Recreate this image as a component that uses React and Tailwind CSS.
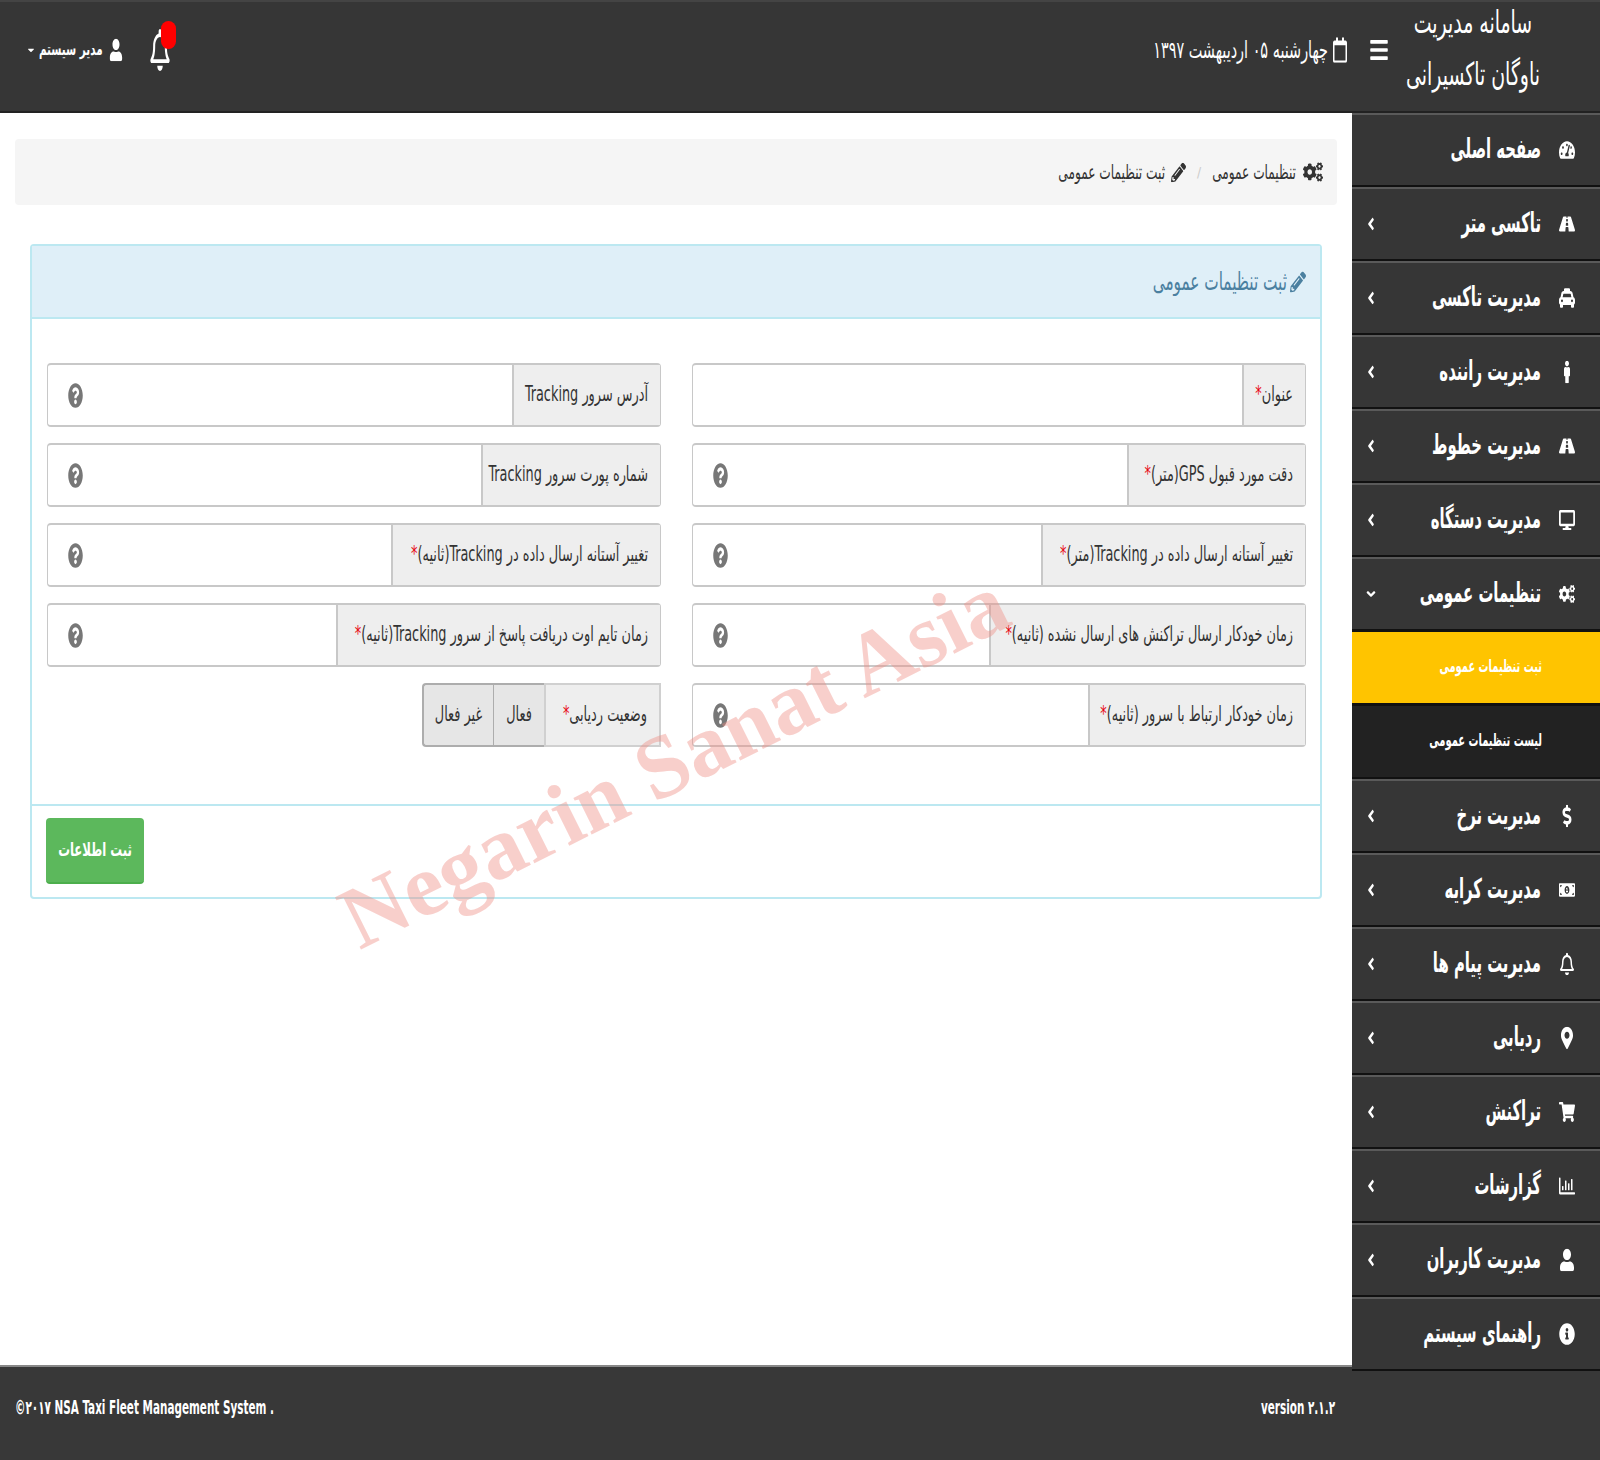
import React from "react";
import {
  FaAngleDown,
  FaAngleLeft,
  FaBars,
  FaCaretDown,
  FaRegChartBar,
  FaCogs,
  FaDesktop,
  FaDollarSign,
  FaInfoCircle,
  FaMale,
  FaMapMarkerAlt,
  FaMoneyBillAlt,
  FaPencilAlt,
  FaQuestionCircle,
  FaRegBell,
  FaRegCalendar,
  FaRoad,
  FaShoppingCart,
  FaTachometerAlt,
  FaTaxi,
  FaUser,
} from "react-icons/fa";

const menu = [
  { title: "صفحه اصلی", icon: FaTachometerAlt },
  { title: "تاکسی متر", icon: FaRoad, arrow: true },
  { title: "مدیریت تاکسی", icon: FaTaxi, arrow: true },
  { title: "مدیریت راننده", icon: FaMale, arrow: true },
  { title: "مدیریت خطوط", icon: FaRoad, arrow: true },
  { title: "مدیریت دستگاه", icon: FaDesktop, arrow: true },
  { title: "تنظیمات عمومی", icon: FaCogs, open: true },
  { title: "ثبت تنظیمات عمومی", sub: "active" },
  { title: "لیست تنظیمات عمومی", sub: "idle" },
  { title: "مدیریت نرخ", icon: FaDollarSign, arrow: true },
  { title: "مدیریت کرایه", icon: FaMoneyBillAlt, arrow: true },
  { title: "مدیریت پیام ها", icon: FaRegBell, arrow: true },
  { title: "ردیابی", icon: FaMapMarkerAlt, arrow: true },
  { title: "تراکنش", icon: FaShoppingCart, arrow: true },
  { title: "گزارشات", icon: FaRegChartBar, arrow: true },
  { title: "مدیریت کاربران", icon: FaUser, arrow: true },
  { title: "راهنمای سیستم", icon: FaInfoCircle },
];

const fields = [
  { label: "عنوان", req: true, w: "w-[63px]" },
  { label: "آدرس سرور Tracking", w: "w-[148px]", help: true },
  { label: "دقت مورد قبول GPS(متر)", req: true, w: "w-[178px]", help: true },
  { label: "شماره پورت سرور Tracking", w: "w-[179px]", help: true },
  { label: "تغییر آستانه ارسال داده در Tracking(متر)", req: true, w: "w-[264px]", help: true },
  { label: "تغییر آستانه ارسال داده در Tracking(ثانیه)", req: true, w: "w-[269px]", help: true },
  { label: "زمان خودکار ارسال تراکنش های ارسال نشده (ثانیه)", req: true, w: "w-[316px]", help: true },
  { label: "زمان تایم اوت دریافت پاسخ از سرور Tracking(ثانیه)", req: true, w: "w-[324px]", help: true },
  { label: "زمان خودکار ارتباط با سرور (ثانیه)", req: true, w: "w-[217px]", help: true },
];

const Tall = ({ children, className = "" }) => (
  <span className={`inline-block whitespace-nowrap ${className || "scale-y-[1.45]"}`}>{children}</span>
);

const Field = ({ label, req, w, help }) => (
  <div className="flex h-16 rounded border-y-2 border-x border-[#c8c8c8] bg-white">
    <div className={`${w} shrink-0 flex items-center px-3 bg-[#eeeeee] border-l-2 border-[#c8c8c8] text-[14.3px] text-[#333] overflow-visible`}>
      <Tall>
        {label}
        {req && <span className="text-red-600">*</span>}
      </Tall>
    </div>
    <div className="flex-1 flex items-center justify-end pl-5">
      {help && <FaQuestionCircle className="text-[#777] text-[15px] scale-y-[1.7]" />}
    </div>
  </div>
);

const SideItem = ({ title, icon: Icon, arrow, open, sub }) => {
  if (sub) {
    return (
      <div
        className={`h-[74px] shrink-0 flex items-center pr-[58px] border-b-2 border-t border-[#111] text-white text-[11px] font-bold ${
          sub === "active" ? "bg-[#ffc400]" : "bg-[#222222]"
        }`}
      >
        <Tall className="scale-y-[1.6]">{title}</Tall>
      </div>
    );
  }
  return (
    <div className="h-[74px] shrink-0 flex items-center bg-[#363636] border-t-2 border-b-2 border-t-[#5a5a5a] border-b-[#111] text-white">
      <span className="w-[59px] flex justify-center pr-2">
        <Icon className="text-[16px] scale-y-[1.4]" />
      </span>
      <Tall className="text-[16.5px] font-bold scale-y-[1.65]">{title}</Tall>
      {arrow && <FaAngleLeft className="mr-auto ml-[12px] text-[14px] scale-y-[1.4]" />}
      {open && <FaAngleDown className="mr-auto ml-[12px] text-[14px]" />}
    </div>
  );
};

export default function App() {
  return (
    <div dir="rtl" className="relative w-[1600px] h-[1460px] flex flex-col bg-white font-['DejaVu_Sans_Condensed','DejaVu_Sans',sans-serif]">
      {/* Header */}
      <header className="h-[113px] shrink-0 flex items-center pb-[14px] bg-[#363636] border-t-2 border-[#444] border-b-2 border-b-[#222] text-white">
        <div className="w-[248px] shrink-0 flex flex-col items-center gap-[20px] pr-[6px] text-[21px]">
          <Tall className="scale-y-[1.5]">سامانه مدیریت</Tall>
          <Tall className="scale-y-[1.5]">ناوگان تاکسیرانی</Tall>
        </div>
        <FaBars className="mr-[-37px] text-[20px] scale-y-[1.3]" />
        <FaRegCalendar className="mr-[21px] text-[16px] scale-y-[1.6]" />
        <Tall className="mr-[4px] text-[16px] scale-y-[1.5]">چهارشنبه ۰۵ اردیبهشت ۱۳۹۷</Tall>
        <div className="mr-auto flex items-center pl-[26px]">
          <div className="relative ml-[26px]">
            <FaRegBell className="text-[22px] scale-y-[1.9]" />
            <span className="absolute -top-[18px] left-[12px] w-[15px] h-[28px] rounded-full bg-[#ff0000]" />
          </div>
          <FaUser className="ml-[6px] text-[14px] scale-y-[1.6]" />
          <Tall className="ml-[3px] text-[11.5px] font-bold scale-y-[1.5]">مدیر سیستم</Tall>
          <FaCaretDown className="text-[10px]" />
        </div>
      </header>

      <div className="flex-1 flex min-h-0">
        {/* Sidebar */}
        <aside className="relative z-10 w-[248px] shrink-0 flex flex-col -mb-[7px]">
          {menu.map((item) => (
            <SideItem key={item.title} {...item} />
          ))}
        </aside>

        {/* Content */}
        <main className="flex-1 min-w-0 pt-[26px] pr-[15px] pl-[15px]">
          <div className="h-[66px] flex items-center rounded bg-[#f5f5f5] pr-[15px] text-[13.5px] text-[#333]">
            <FaCogs className="text-[20px] scale-y-[1.2] -mr-[1px]" />
            <Tall className="mr-[7px] scale-y-[1.5]">تنظیمات عمومی</Tall>
            <span className="mx-[11px] text-[#ccc]">/</span>
            <FaPencilAlt className="text-[15px] scale-y-[1.3]" />
            <Tall className="mr-[6px] scale-y-[1.5]">ثبت تنظیمات عمومی</Tall>
          </div>

          <section className="mt-[39px] mx-[15px] rounded border-2 border-[#bce8f1]">
            <div className="h-[73px] flex items-center pr-[14px] bg-[#dfeff8] border-b-2 border-[#bce8f1] text-[#4b80a0] text-[17px]">
              <FaPencilAlt className="text-[16px] scale-y-[1.3]" />
              <Tall className="mr-[3px] scale-y-[1.5]">ثبت تنظیمات عمومی</Tall>
            </div>
            <div className="pr-[14px] pl-[15px] pt-[44px] pb-[57px] grid grid-cols-2 gap-x-[31px] gap-y-4">
              {fields.map((f) => (
                <Field key={f.label} {...f} />
              ))}
              <div className="flex h-16 text-[14.3px] text-[#333]">
                <div className="w-[117px] flex items-center px-3 bg-[#eeeeee] border-2 border-[#d0d0d0]">
                  <Tall>
                    وضعیت ردیابی<span className="text-red-600">*</span>
                  </Tall>
                </div>
                <div className="w-[51px] flex items-center justify-center bg-[#e6e6e6] border-y-2 border-l border-[#adadad]">
                  <Tall>فعال</Tall>
                </div>
                <div className="w-[71px] flex items-center justify-center bg-[#e6e6e6] border-y-2 border-l-2 border-[#adadad] rounded-l">
                  <Tall>غیر فعال</Tall>
                </div>
              </div>
            </div>
            <div className="h-[93px] flex items-start pt-[12px] pr-[14px] pl-[14px] border-t-2 border-[#bce8f1]">
              <button className="w-[98px] h-[66px] mr-auto rounded bg-[#5cb85c] border-b-2 border-[#4cae4c] text-white text-[13px] font-bold">
                <Tall>ثبت اطلاعات</Tall>
              </button>
            </div>
          </section>
        </main>
      </div>

      {/* Footer */}
      <footer className="h-[95px] shrink-0 flex items-center justify-between pr-[265px] pl-[15px] pb-[10px] bg-[#383838] border-t-2 border-[#888] text-white text-[11.6px] font-bold">
        <Tall className="scale-y-[1.6]">version ۲.۱.۲</Tall>
        <span dir="ltr">
          <Tall className="scale-y-[1.6]">©۲۰۱۷ NSA Taxi Fleet Management System .</Tall>
        </span>
      </footer>

      {/* Watermark */}
      <div
        dir="ltr"
        className="absolute left-[308px] top-[716px] -rotate-[26.5deg] whitespace-nowrap pointer-events-none font-['Liberation_Serif',serif] font-bold text-[89px] leading-none text-[#f08a80] opacity-40"
      >
        Negarin Sanat Asia
      </div>
    </div>
  );
}
